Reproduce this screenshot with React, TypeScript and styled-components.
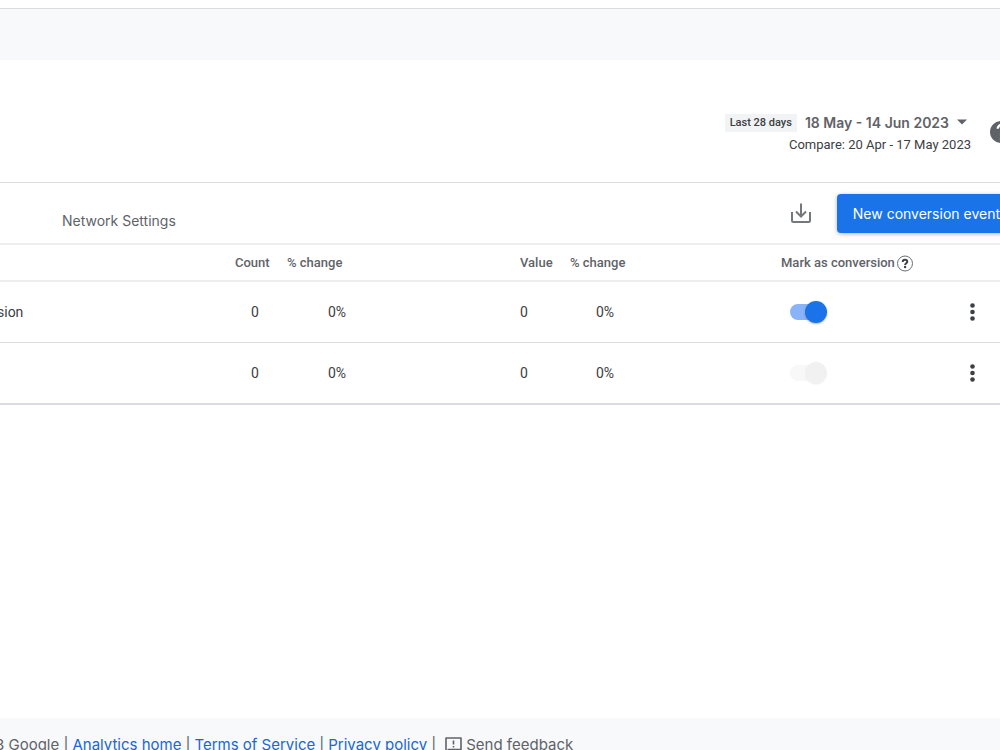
import React from 'react';
import styled, { createGlobalStyle } from 'styled-components';

type TEvent = {
  name: string;
  count: string;
  countChange: string;
  value: string;
  valueChange: string;
  marked: boolean;
};

const events: TEvent[] = [
  {
    name: 'sion',
    count: '0',
    countChange: '0%',
    value: '0',
    valueChange: '0%',
    marked: true,
  },
  {
    name: '',
    count: '0',
    countChange: '0%',
    value: '0',
    valueChange: '0%',
    marked: false,
  },
];

const App = () => (
  <>
    <GlobalStyle />
    <Page>
      <TopBand />
      <Header>
        <DateRange>
          <DateButton type="button">
            <Preset>Last 28 days</Preset>
            <Range>18 May - 14 Jun 2023</Range>
            <svg width="10" height="10" viewBox="0 0 10 10" aria-hidden="true">
              <path d="M0 1.5h10L5 6.5z" fill="#5f6368" />
            </svg>
          </DateButton>
          <Compare>Compare: 20 Apr - 17 May 2023</Compare>
        </DateRange>
        <IconButton type="button" aria-label="Help">
          <svg width="24" height="24" viewBox="0 0 24 24">
            <path
              fill="#5f6368"
              d="M12 1a11 11 0 1 0 0 22 11 11 0 0 0 0-22zm1.1 18.7h-2.2v-2.2h2.2zm2.3-8.5-1 1c-.8.8-1.3 1.5-1.3 3.1h-2.2v-.5c0-1.2.5-2.3 1.3-3.1l1.4-1.4a2.2 2.2 0 1 0-3.8-1.6H7.6a4.4 4.4 0 1 1 7.8 2.5z"
            />
          </svg>
        </IconButton>
      </Header>
      <Toolbar>
        <Tab type="button">Network Settings</Tab>
        <Actions>
          <IconButton type="button" aria-label="Download">
            <svg
              width="24"
              height="24"
              viewBox="0 0 24 24"
              fill="none"
              stroke="#74777b"
              strokeWidth="2"
            >
              <path d="M12 2.500v12.500M7 10.500l5 5 5-5" />
              <path d="M3 11v8.500A1.500 1.500 0 0 0 4.500 21h15a1.500 1.500 0 0 0 1.500-1.500V11" />
            </svg>
          </IconButton>
          <NewButton type="button">New conversion event</NewButton>
        </Actions>
      </Toolbar>
      <Table>
        <colgroup>
          <Col $width={23.5} />
          <Col $width={5.2} />
          <Col $width={23.3} />
          <Col $width={5} />
          <Col $width={21.1} />
          <Col $width={16.9} />
          <Col $width={5} />
        </colgroup>
        <thead>
          <tr>
            <Heading aria-label="Conversion name" />
            <Heading>Count</Heading>
            <Heading>% change</Heading>
            <Heading>Value</Heading>
            <Heading>% change</Heading>
            <Heading>
              <Marked>
                Mark as conversion
                <svg width="18" height="18" viewBox="0 0 18 18" aria-hidden="true">
                  <circle cx="9" cy="9.500" r="7.500" fill="none" stroke="#6b6f74" />
                  <path
                    d="M6.700 8c0-3 4.600-2.800 4.600-.2 0 1.500-2.200 1.500-2.200 3.100"
                    fill="none"
                    stroke="#3c4043"
                    strokeWidth="1.900"
                  />
                  <circle cx="9.100" cy="13" r="1.200" fill="#3c4043" />
                </svg>
              </Marked>
            </Heading>
            <Heading aria-label="Menu" />
          </tr>
        </thead>
        <tbody>
          {events.map((event, index) => (
            <Row key={index}>
              <NameCell>{event.name}</NameCell>
              <Cell $inset={16}>{event.count}</Cell>
              <Cell $inset={41}>{event.countChange}</Cell>
              <Cell>{event.value}</Cell>
              <Cell $inset={26}>{event.valueChange}</Cell>
              <Cell $inset={8}>
                <Switch
                  type="checkbox"
                  aria-label="Mark as conversion"
                  defaultChecked
                  disabled={!event.marked}
                />
              </Cell>
              <Cell $inset={10}>
                <IconButton type="button" aria-label="More options">
                  <svg width="24" height="24" viewBox="0 0 24 24" fill="#3c4043">
                    <circle cx="12.500" cy="5.500" r="2.300" />
                    <circle cx="12.500" cy="12" r="2.300" />
                    <circle cx="12.500" cy="18.500" r="2.300" />
                  </svg>
                </IconButton>
              </Cell>
            </Row>
          ))}
        </tbody>
      </Table>
      <Footer>
        <span>3 Google |</span>
        <FooterLink href="#home">Analytics home</FooterLink>
        <span>|</span>
        <FooterLink href="#terms">Terms of Service</FooterLink>
        <span>|</span>
        <FooterLink href="#privacy">Privacy policy</FooterLink>
        <span>|</span>
        <Feedback type="button">
          <svg width="18" height="18" viewBox="0 0 18 18" aria-hidden="true">
            <path
              d="M2 16V2h15v11.500H4.500z"
              fill="none"
              stroke="#5f6368"
              strokeWidth="1.600"
              strokeLinejoin="round"
            />
            <path d="M9.500 4.500v4M9.500 10v1.600" stroke="#5f6368" strokeWidth="1.600" />
          </svg>
          Send feedback
        </Feedback>
      </Footer>
    </Page>
  </>
);

export default App;

const GlobalStyle = createGlobalStyle`
  * {
    box-sizing: border-box;
  }
  body {
    margin: 0;
    overflow: hidden;
    background: #fff;
    color: #3c4043;
    font-family: Roboto, sans-serif;
  }
  button {
    padding: 0;
    border: 0;
    background: none;
    color: inherit;
    font: inherit;
    cursor: pointer;
  }
  svg {
    display: block;
    flex: none;
  }
`;

const Page = styled.div`
  display: flex;
  flex-direction: column;
  min-height: calc(100vh + 22px);
`;

const TopBand = styled.div`
  height: 52px;
  margin-top: 8px;
  border-top: 1px solid #dadce0;
  background: #f8f9fb;
`;

const Header = styled.header`
  display: flex;
  justify-content: flex-end;
  align-items: center;
  gap: 18px;
  height: 123px;
  padding-top: 22px;
  margin-right: -13px;
  border-bottom: 1px solid #dadce0;
`;

const DateRange = styled.div`
  display: flex;
  flex-direction: column;
  align-items: flex-end;
  gap: 2px;
  margin-top: 4px;
`;

const DateButton = styled.button`
  display: flex;
  align-items: center;
  gap: 8px;
  padding-right: 4px;
`;

const Preset = styled.span`
  padding: 0 5px;
  background: #f1f3f4;
  font-size: 11px;
  font-weight: 500;
  line-height: 18px;
`;

const Range = styled.span`
  color: #5f6368;
  font-family: Inter, sans-serif;
  font-size: 14px;
  font-weight: 600;
  line-height: 20px;
`;

const Compare = styled.div`
  font-size: 13px;
  line-height: 20px;
`;

const IconButton = styled.button`
  display: flex;
`;

const Toolbar = styled.div`
  display: flex;
  justify-content: space-between;
  align-items: center;
  height: 62px;
  padding-left: 62px;
  margin-right: -16px;
  border-bottom: 2px solid #eeeeef;
`;

const Tab = styled.button`
  padding-top: 16px;
  color: #5f6368;
  font-family: Inter, sans-serif;
  font-size: 14px;
  line-height: 20px;
`;

const Actions = styled.div`
  display: flex;
  align-items: center;
  gap: 24px;
`;

const NewButton = styled.button`
  height: 39px;
  padding: 0 16px;
  border-radius: 4px;
  background: #1a73e8;
  box-shadow: 0 1px 4px rgba(60, 64, 67, 0.4);
  color: #fff;
  font-family: Inter, sans-serif;
  font-size: 14px;
  white-space: nowrap;
`;

const Table = styled.table`
  width: 100%;
  table-layout: fixed;
  border-collapse: separate;
  border-spacing: 0;
  border-bottom: 1px solid #dadce0;
`;

const Col = styled.col<{ $width: number }>`
  width: ${({ $width }) => $width}%;
`;

const Heading = styled.th`
  height: 37px;
  padding: 0;
  border-bottom: 2px solid #eeeeef;
  color: #5f6368;
  font-size: 13px;
  font-weight: 500;
  text-align: left;
  white-space: nowrap;
`;

const Marked = styled.div`
  display: flex;
  align-items: center;
  gap: 1px;
`;

const Row = styled.tr`
  height: 61px;
`;

const Cell = styled.td<{ $inset?: number }>`
  padding: 0 0 0 ${({ $inset = 0 }) => $inset}px;
  border-bottom: 1px solid #dadce0;
  font-size: 14px;
`;

const NameCell = styled(Cell)`
  text-indent: -3px;
`;

const Switch = styled.input`
  display: flex;
  align-items: center;
  justify-content: flex-end;
  position: relative;
  appearance: none;
  width: 38px;
  height: 22px;
  margin: 0;
  cursor: pointer;

  &::before {
    content: '';
    position: absolute;
    left: 1px;
    width: 32px;
    height: 16px;
    border-radius: 8px;
    background: #8ab4f8;
  }

  &::after {
    content: '';
    position: relative;
    width: 22px;
    height: 22px;
    border-radius: 50%;
    background: #1a73e8;
    box-shadow: 0 1px 2px rgba(60, 64, 67, 0.4);
  }

  &:disabled::before {
    background: #f8f8f8;
  }

  &:disabled::after {
    background: #f1f1f1;
    box-shadow: 0 1px 1px rgba(60, 64, 67, 0.04);
  }
`;

const Footer = styled.footer`
  display: flex;
  align-items: center;
  gap: 4px;
  height: 54px;
  margin-top: auto;
  margin-left: -5px;
  background: #f8f9fb;
  color: #5f6368;
  font-family: Inter, sans-serif;
  font-size: 15px;
  line-height: 20px;
  white-space: nowrap;
`;

const FooterLink = styled.a`
  color: #1967d2;
  text-decoration: none;
`;

const Feedback = styled.button`
  display: flex;
  align-items: center;
  gap: 4px;
  margin-left: 4px;
`;
